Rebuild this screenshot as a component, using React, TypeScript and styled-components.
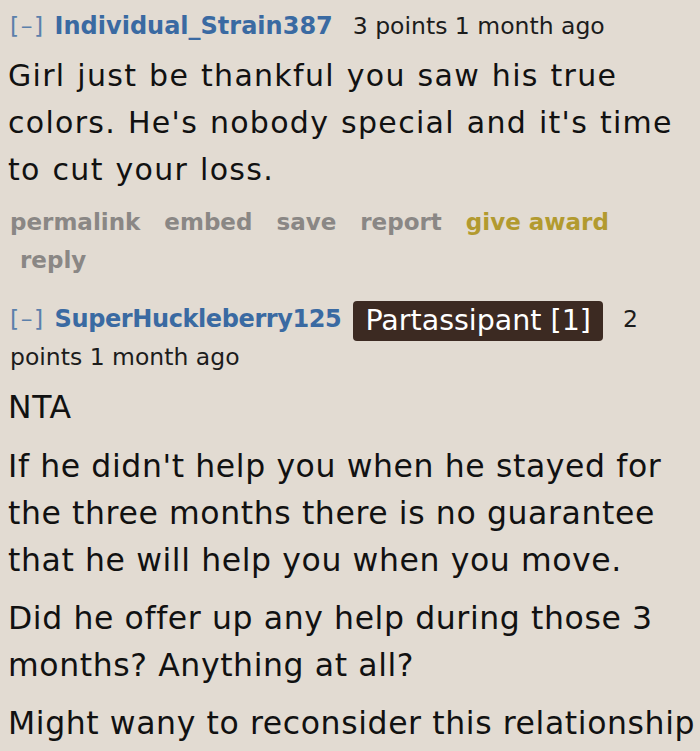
import React from "react";
import styled, { createGlobalStyle } from "styled-components";

const Global = createGlobalStyle`
  html, body { margin: 0; padding: 0; background: #e2dbd2; }
  body { font-family: "DejaVu Sans", Verdana, sans-serif; overflow: hidden; }
`;

const Page = styled.div`
  width: 700px;
  height: 751px;
  overflow: hidden;
  padding: 8px 0 0 8px;
  box-sizing: border-box;
`;

const Comment = styled.div<{ $gap?: number }>`
  margin-bottom: ${(p) => p.$gap ?? 0}px;
`;

const Tagline = styled.div`
  font-size: 23.5px;
  line-height: 37px;
  color: #1c1c1c;
  padding-left: 2px;
`;

const Expand = styled.span`
  color: #5b80ab;
  letter-spacing: 1.5px;
  margin-right: 10px;
`;

const Author = styled.span<{ $gap: number; $tight?: boolean }>`
  color: #3a6aa2;
  font-weight: bold;
  font-size: 24px;
  letter-spacing: ${(p) => (p.$tight ? "-0.4px" : "0")};
  margin-right: ${(p) => p.$gap}px;
`;

const Flair = styled.span`
  display: inline-block;
  background: #3c2a22;
  color: #fff;
  font-size: 28.5px;
  line-height: 40px;
  padding: 0 12px;
  border-radius: 4px;
  margin: -2px 20px -2px 0;
  vertical-align: middle;
`;

const Body = styled.div<{ $wide?: boolean }>`
  font-family: "DejaVu Sans", Verdana, sans-serif;
  font-size: ${(p) => (p.$wide ? "31.5px" : "30px")};
  letter-spacing: ${(p) => (p.$wide ? "0.6px" : "1.3px")};
  word-spacing: ${(p) => (p.$wide ? "0px" : "1px")};
  line-height: 47px;
  color: #111;
  margin-top: ${(p) => (p.$wide ? "8px" : "7px")};
  p { margin: 0 0 ${(p) => (p.$wide ? "11px" : "10px")} 0; }
  p:last-child { margin-bottom: ${(p) => (p.$wide ? "9px" : "10px")}; }
  p:first-child { margin-bottom: ${(p) => (p.$wide ? "12px" : "10px")}; }
`;

const Buttons = styled.ul`
  list-style: none;
  margin: 0;
  padding: 0;
  font-size: 23px;
  font-weight: bold;
  line-height: 38px;
  width: 640px;
`;

const Btn = styled.li<{ $gold?: boolean }>`
  display: inline-block;
  padding-left: 12px;
  padding-right: 12px;
  color: ${(p) => (p.$gold ? "#b29a2f" : "#8a8785")};
  &:first-child { padding-left: 2px; }
`;

export default function App() {
  return (
    <Page>
      <Global />
      <Comment $gap={22}>
        <Tagline>
          <Expand>[–]</Expand>
          <Author $gap={20}>Individual_Strain387</Author>
          3 points 1 month ago
        </Tagline>
        <Body>
          <p>Girl just be thankful you saw his true colors. He's nobody special and it's time to cut your loss.</p>
        </Body>
        <Buttons>
          <Btn>permalink</Btn>
          <Btn>embed</Btn>
          <Btn>save</Btn>
          <Btn>report</Btn>
          <Btn $gold>give award</Btn>
          <Btn>reply</Btn>
        </Buttons>
      </Comment>
      <Comment>
        <Tagline>
          <Expand>[–]</Expand>
          <Author $gap={12} $tight>SuperHuckleberry125</Author>
          <Flair>Partassipant [1]</Flair>
          2 points 1 month ago
        </Tagline>
        <Body $wide>
          <p>NTA</p>
          <p>If he didn't help you when he stayed for the three months there is no guarantee that he will help you when you move.</p>
          <p>Did he offer up any help during those 3 months? Anything at all?</p>
          <p>Might wany to reconsider this relationship</p>
        </Body>
      </Comment>
    </Page>
  );
}
